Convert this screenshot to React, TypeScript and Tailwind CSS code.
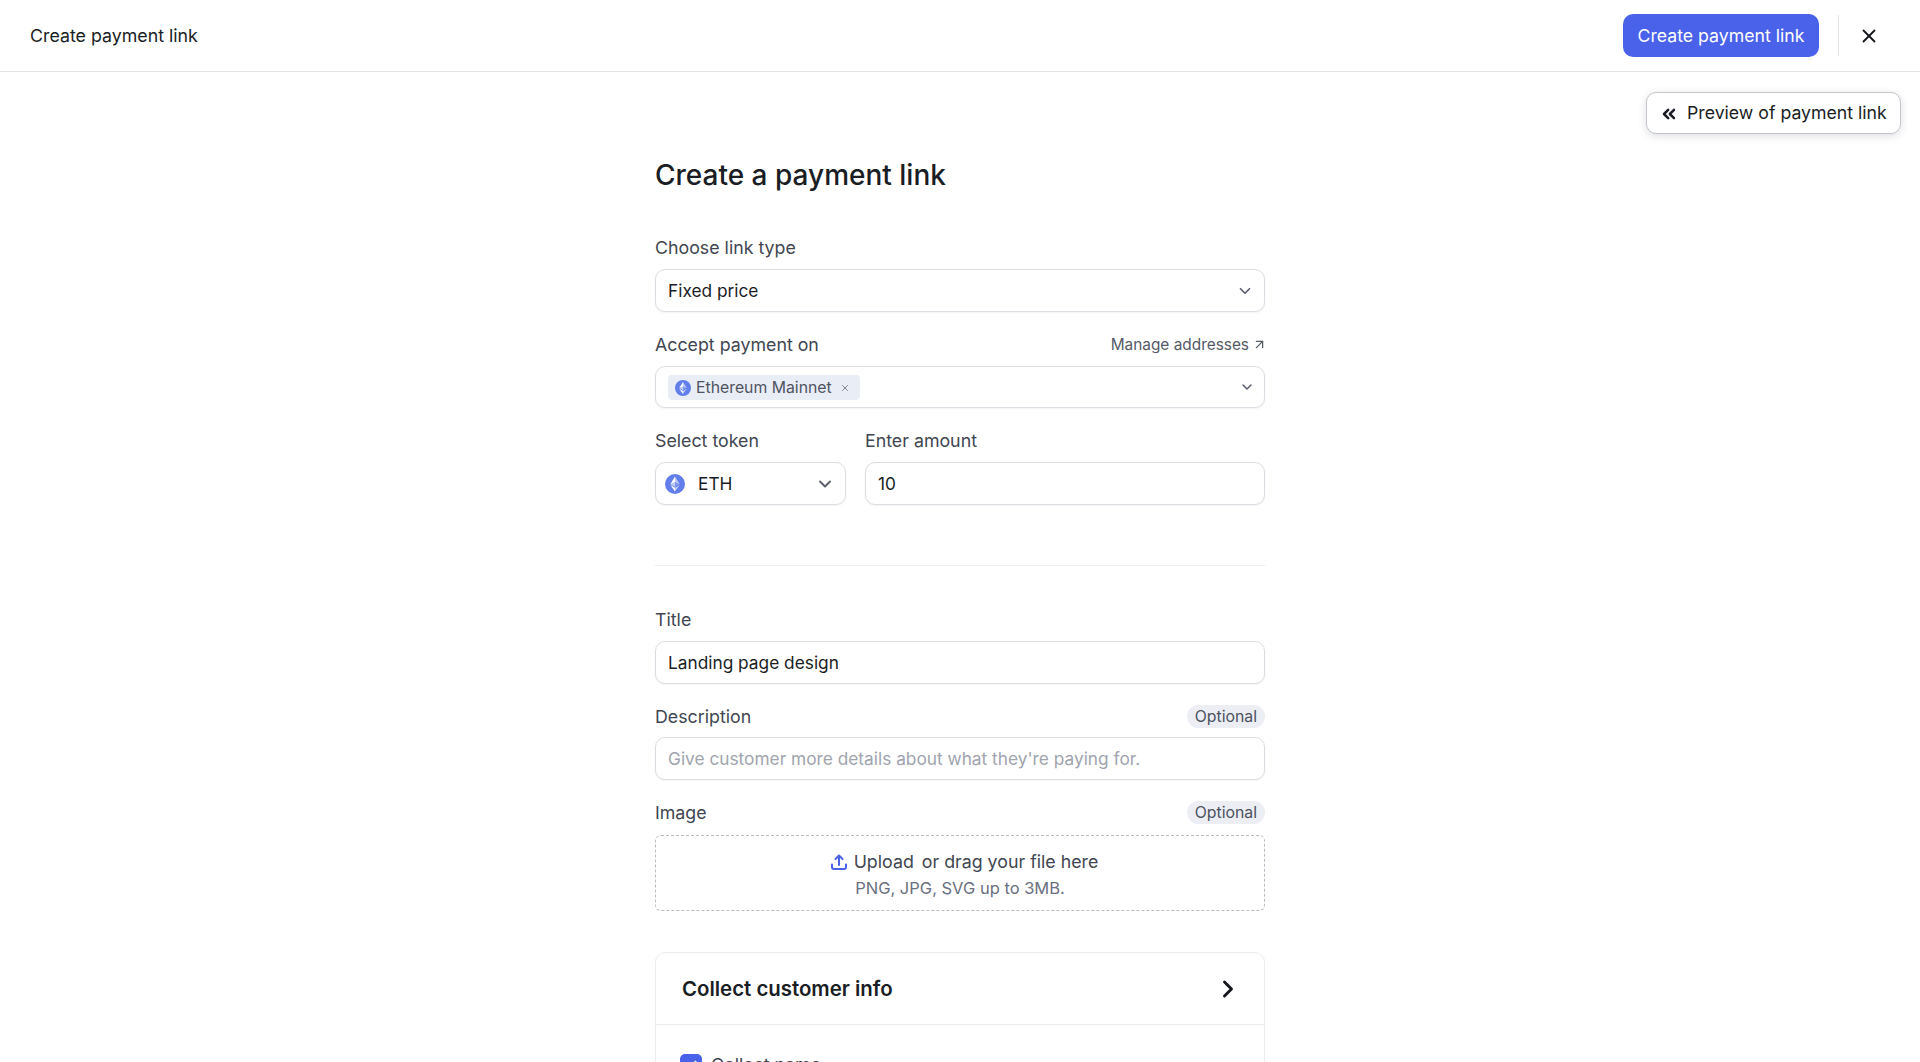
import React from "react";
import { X, ChevronDown, ChevronRight, ChevronsLeft, ArrowUpRight, Check } from "lucide-react";

function EthIcon({ size }: { size: number }) {
  return (
    <svg width={size} height={size} viewBox="0 0 32 32" className="shrink-0">
      <circle cx="16" cy="16" r="16" fill="#627EEA" />
      <path d="M16 4v8.9l7.5 3.3L16 4z" fill="#fff" fillOpacity="0.6" />
      <path d="M16 4 8.5 16.2l7.5-3.3V4z" fill="#fff" />
      <path d="M16 22v6l7.5-10.4L16 22z" fill="#fff" fillOpacity="0.6" />
      <path d="M16 28v-6l-7.5-4.4L16 28z" fill="#fff" />
      <path d="m16 20.6 7.5-4.4-7.5-3.3v7.7z" fill="#fff" fillOpacity="0.2" />
      <path d="m8.5 16.2 7.5 4.4v-7.7l-7.5 3.3z" fill="#fff" fillOpacity="0.6" />
    </svg>
  );
}

function Label({ children }: { children: React.ReactNode }) {
  return <div className="h-6 text-[17.8px] leading-[26px] font-normal text-[#414652]">{children}</div>;
}

function Optional() {
  return (
    <span className="flex h-[23px] items-center rounded-full bg-[#eceef4] px-[8px] pt-[1px] text-[15.8px] text-[#4b5160]">
      Optional
    </span>
  );
}

const box =
  "flex items-center rounded-[10px] border border-[#dcdde2] bg-white shadow-[0_1px_2px_rgba(16,24,40,0.05)] text-[17.3px] text-[#1a1d24]";

export default function App() {
  return (
    <div className="relative h-[1062px] overflow-hidden bg-white font-['Inter',sans-serif]">
      <header className="flex h-[72px] items-center justify-between border-b border-[#e2e3e6] pl-[30px] pr-[40px]">
        <span className="pt-[1px] text-[17.8px] text-[#1a1d24]">Create payment link</span>
        <div className="flex items-center">
          <button className="h-[43px] w-[196px] rounded-[10px] bg-[#4a62ea] pt-[1px] text-[17.7px] font-normal text-white">
            Create payment link
          </button>
          <div className="ml-[19px] h-[41px] w-px bg-[#e4e5e8]" />
          <X className="ml-[19px] h-[22px] w-[22px] text-[#15171c]" strokeWidth={2} />
        </div>
      </header>

      <button className="absolute left-[1646px] top-[92px] flex h-[42px] w-[255px] items-center gap-[8px] rounded-[10px] border border-[#c4c6cc] bg-white pl-[12px] pt-[1px] text-[17.7px] text-[#1a1d24] shadow-[0_2px_8px_rgba(16,24,40,0.14)]">
        <ChevronsLeft className="h-[20px] w-[20px]" strokeWidth={3} />
        <span>Preview of payment link</span>
      </button>

      <main className="mx-auto w-[610px] pt-[85px]">
        <h1 className="text-[28px] leading-9 font-medium text-[#1a1d24]">Create a payment link</h1>

        <div className="mt-[42px]">
          <Label>Choose link type</Label>
          <div className={`${box} mt-[10px] h-[43px] justify-between pl-[12px] pr-[10px]`}>
            <span>Fixed price</span>
            <ChevronDown className="h-[18px] w-[18px] text-[#5a5f6b]" strokeWidth={2.25} />
          </div>
        </div>

        <div className="mt-[20px]">
          <div className="flex items-center justify-between">
            <Label>Accept payment on</Label>
            <span className="-mr-[2px] flex items-center gap-[3px] pt-[1px] text-[15.4px] text-[#555a67]">
              Manage addresses
              <ArrowUpRight className="h-[15px] w-[15px]" />
            </span>
          </div>
          <div className={`${box} mt-[10px] h-[42px] justify-between pl-[12px] pr-[9px]`}>
            <span className="flex h-[25px] items-center gap-[5px] rounded-[4px] bg-[#e9edf6] pl-[7px] pr-[10px] pt-[1px] text-[15.8px] text-[#4e5462]">
              <EthIcon size={16} />
              Ethereum Mainnet
              <X className="ml-[3px] h-[10px] w-[10px] text-[#6b7080]" strokeWidth={2} />
            </span>
            <ChevronDown className="h-[16px] w-[16px] text-[#5a5f6b]" strokeWidth={2.25} />
          </div>
        </div>

        <div className="mt-[20px] flex gap-[19px]">
          <div className="w-[191px]">
            <Label>Select token</Label>
            <div className={`${box} mt-[10px] h-[43px] pl-[9px] pr-[10px]`}>
              <EthIcon size={20} />
              <span className="ml-[13px] flex-1">ETH</span>
              <ChevronDown className="h-[20px] w-[20px] text-[#5a5f6b]" strokeWidth={2.25} />
            </div>
          </div>
          <div className="flex-1">
            <Label>Enter amount</Label>
            <div className={`${box} mt-[10px] h-[43px] pl-[12px]`}>10</div>
          </div>
        </div>

        <div className="mt-[60px] h-px bg-[#eceded]" />

        <div className="mt-[41px]">
          <Label>Title</Label>
          <div className={`${box} mt-[10px] h-[43px] pl-[12px]`}>Landing page design</div>
        </div>

        <div className="mt-[20px]">
          <div className="flex items-center justify-between">
            <Label>Description</Label>
            <Optional />
          </div>
          <div className={`${box} mt-[9px] h-[43px] pl-[12px] text-[#a0a4ae]`}>
            Give customer more details about what they're paying for.
          </div>
        </div>

        <div className="mt-[20px]">
          <div className="flex items-center justify-between">
            <Label>Image</Label>
            <Optional />
          </div>
          <div className="mt-[11px] flex h-[76px] flex-col items-center justify-center rounded-[6px] border border-dashed border-[#b8bbc2] pt-[1px]">
            <div className="ml-[8px] flex items-center text-[17.8px] leading-[26px] text-[#414652]">
              <svg
                width="18"
                height="18"
                viewBox="0 0 18 18"
                fill="none"
                stroke="#4a62ea"
                strokeWidth="2"
                strokeLinecap="round"
                strokeLinejoin="round"
                className="mr-[6px]"
              >
                <path d="M9 12V2.5M5.5 6 9 2.5 12.5 6M2 11.5v2.5a2 2 0 0 0 2 2h10a2 2 0 0 0 2-2v-2.5" />
              </svg>
              <span>Upload</span>
              <span className="ml-[8px]">or drag your file here</span>
            </div>
            <div className="mt-[3px] text-[16.5px] leading-5 text-[#6b7080]">PNG, JPG, SVG up to 3MB.</div>
          </div>
        </div>

        <section className="mt-[41px] rounded-[10px] border border-[#ececee]">
          <div className="flex h-[72px] items-center justify-between border-b border-[#ececee] pl-[26px] pr-[22px]">
            <span className="pt-[2px] text-[20.4px] font-semibold text-[#1a1d24]">Collect customer info</span>
            <ChevronRight className="h-[28px] w-[28px] text-[#15171c]" strokeWidth={2.5} />
          </div>
          <div className="flex items-center gap-[9px] pl-[24px] pt-[27px]">
            <span className="flex h-[22px] w-[22px] items-center justify-center rounded-[5px] bg-[#4a62ea]">
              <Check className="h-[14px] w-[14px] text-white" strokeWidth={3} />
            </span>
            <span className="text-[17.8px] text-[#414652]">Collect name</span>
          </div>
        </section>
      </main>
    </div>
  );
}
